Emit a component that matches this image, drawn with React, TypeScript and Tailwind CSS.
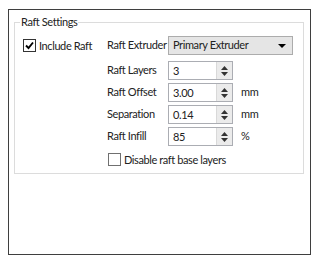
import React from 'react';

const font = { fontFamily: 'Lato, "Liberation Sans", sans-serif' };

const Check = ({ checked }: { checked: boolean }) => (
  <span className={`w-[13px] h-[13px] border flex items-center justify-center bg-white shrink-0 ${checked ? 'border-[#333333]' : 'border-[#707070]'}`}>
    {checked && (
      <svg width="9" height="9" viewBox="0 0 9 9">
        <path d="M1 4.5 L3.5 7 L8 1.5" fill="none" stroke="#000" strokeWidth="1.9" />
      </svg>
    )}
  </span>
);

const Spin = ({ value }: { value: string }) => (
  <div className="w-[65px] h-[19px] border border-[#abadb3] bg-white flex">
    <span className="flex-1 pl-[4px] leading-[17px]">{value}</span>
    <span className="w-[16px] h-full bg-[#ebebeb] border-l border-[#d9d9d9] flex flex-col items-center justify-center gap-[2px]">
      <svg width="7" height="4" viewBox="0 0 7 4"><path d="M0 4 L3.5 0 L7 4 Z" fill="#333" /></svg>
      <svg width="7" height="4" viewBox="0 0 7 4"><path d="M0 0 L3.5 4 L7 0 Z" fill="#333" /></svg>
    </span>
  </div>
);

const Row = ({ label, children, unit }: { label: string; children: React.ReactNode; unit?: string }) => (
  <div className="flex items-center h-[19px]">
    <span className="w-[61px] shrink-0">{label}</span>
    {children}
    {unit && <span className="ml-[8px]">{unit}</span>}
  </div>
);

export default function App() {
  return (
    <div className="w-[316px] h-[269px] bg-white pt-[9px] pl-[8px] text-[11px] tracking-[-0.4px] text-[#222222] whitespace-nowrap" style={font}>
      <div className="w-[303px] h-[246px] border border-[#3f3f3f] pt-[12px] pl-[5px]">
        <div className="relative w-[290px] h-[152px] border border-[#dcdcdc] flex">
          <span className="absolute -top-[9px] left-[5px] bg-white px-[1px] leading-[16px]">Raft Settings</span>
          <div className="w-[92px] pl-[8px] pt-[16px]">
            <label className="flex items-center gap-[3px]">
              <Check checked />
              <span className="leading-[13px]">Include Raft</span>
            </label>
          </div>
          <div className="flex flex-col pt-[13px]">
            <Row label="Raft Extruder">
              <div className="w-[125px] h-[19px] border border-[#acacac] bg-[#e5e5e5] flex items-center pl-[4px] pr-[6px]">
                <span className="flex-1">Primary Extruder</span>
                <svg width="8" height="4" viewBox="0 0 8 4"><path d="M0 0 L8 0 L4 4 Z" fill="#000" /></svg>
              </div>
            </Row>
            <div className="h-[6px]" />
            <Row label="Raft Layers"><Spin value="3" /></Row>
            <div className="h-[3px]" />
            <Row label="Raft Offset" unit="mm"><Spin value="3.00" /></Row>
            <div className="h-[3px]" />
            <Row label="Separation" unit="mm"><Spin value="0.14" /></Row>
            <div className="h-[3px]" />
            <Row label="Raft Infill" unit="%"><Spin value="85" /></Row>
            <label className="flex items-center gap-[3px] mt-[7px] pl-[1px]">
              <Check checked={false} />
              <span className="leading-[13px]">Disable raft base layers</span>
            </label>
          </div>
        </div>
      </div>
    </div>
  );
}
